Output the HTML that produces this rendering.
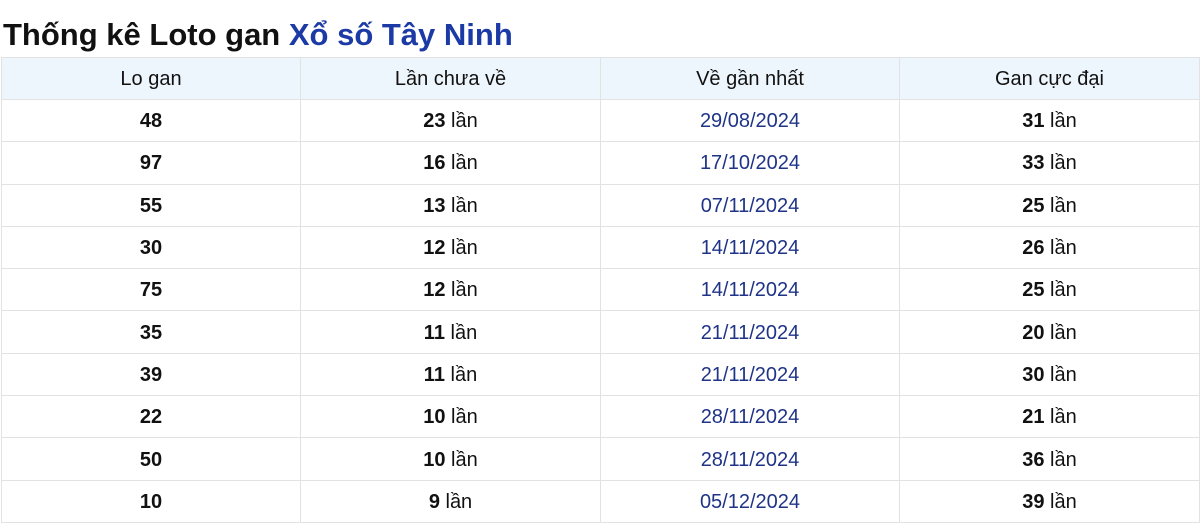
<!DOCTYPE html>
<html><head><meta charset="utf-8"><style>
body{margin:0;background:#fff;font-family:"Liberation Sans",sans-serif;}
h1{margin:0;position:absolute;left:3px;top:15px;font-size:31px;font-weight:bold;color:#111;line-height:40px;white-space:nowrap}
h1 span{color:#1c3aa6}
table{position:absolute;left:1px;top:57px;width:1198px;border-collapse:collapse;table-layout:fixed}
td,th{border:1px solid #e2e2e2;text-align:center;font-size:20px;height:39.3px;padding:2px 0 0 0;color:#111}
th{background:#eef6fd;font-weight:normal;height:39px}
td b{font-weight:bold}
td.d{color:#1f3487}
</style></head><body>
<h1>Thống kê Loto gan <span>Xổ số Tây Ninh</span></h1>
<table>
<colgroup><col style="width:299px"><col style="width:300px"><col style="width:299px"><col style="width:300px"></colgroup>
<tr><th>Lo gan</th><th>Lần chưa về</th><th>Về gần nhất</th><th>Gan cực đại</th></tr>
<tr><td><b>48</b></td><td><b>23</b> lần</td><td class="d">29/08/2024</td><td><b>31</b> lần</td></tr>
<tr><td><b>97</b></td><td><b>16</b> lần</td><td class="d">17/10/2024</td><td><b>33</b> lần</td></tr>
<tr><td><b>55</b></td><td><b>13</b> lần</td><td class="d">07/11/2024</td><td><b>25</b> lần</td></tr>
<tr><td><b>30</b></td><td><b>12</b> lần</td><td class="d">14/11/2024</td><td><b>26</b> lần</td></tr>
<tr><td><b>75</b></td><td><b>12</b> lần</td><td class="d">14/11/2024</td><td><b>25</b> lần</td></tr>
<tr><td><b>35</b></td><td><b>11</b> lần</td><td class="d">21/11/2024</td><td><b>20</b> lần</td></tr>
<tr><td><b>39</b></td><td><b>11</b> lần</td><td class="d">21/11/2024</td><td><b>30</b> lần</td></tr>
<tr><td><b>22</b></td><td><b>10</b> lần</td><td class="d">28/11/2024</td><td><b>21</b> lần</td></tr>
<tr><td><b>50</b></td><td><b>10</b> lần</td><td class="d">28/11/2024</td><td><b>36</b> lần</td></tr>
<tr><td><b>10</b></td><td><b>9</b> lần</td><td class="d">05/12/2024</td><td><b>39</b> lần</td></tr>
</table>
</body></html>
